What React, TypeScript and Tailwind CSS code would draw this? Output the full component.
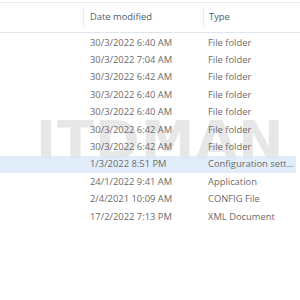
const rows = [
    { date: '30/3/2022 6:40 AM', type: 'File folder' },
    { date: '30/3/2022 7:04 AM', type: 'File folder' },
    { date: '30/3/2022 6:42 AM', type: 'File folder' },
    { date: '30/3/2022 6:40 AM', type: 'File folder' },
    { date: '30/3/2022 6:40 AM', type: 'File folder' },
    { date: '30/3/2022 6:42 AM', type: 'File folder' },
    { date: '30/3/2022 6:42 AM', type: 'File folder' },
    { date: '1/3/2022 8:51 PM', type: 'Configuration sett...', selected: true },
    { date: '24/1/2022 9:41 AM', type: 'Application' },
    { date: '2/4/2021 10:09 AM', type: 'CONFIG File' },
    { date: '17/2/2022 7:13 PM', type: 'XML Document' },
];

export default function App() {
    return (
        <div
            className="relative h-[300px] w-[300px] overflow-hidden bg-white text-[9.4px]"
            style={{ fontFamily: '"Open Sans", "Noto Sans", sans-serif' }}
        >
            <div
                className="pointer-events-none absolute left-[36px] top-[114px] whitespace-nowrap text-[54px] font-black leading-none tracking-[1px] text-[#d8d8d8] opacity-60"
                style={{ fontFamily: '"DejaVu Sans", sans-serif' }}
            >
                ITDMAN
            </div>
            <div className="relative">
                <div className="mt-[2px] border-t border-[#ececec]" />
                <div className="flex h-[30px] items-center border-b border-[#dbe6ef] text-[#4d5d6e]">
                    <div className="w-[84px] self-stretch py-[5px]">
                        <div className="h-full border-r border-[#ececec]" />
                    </div>
                    <div className="w-[120px] self-stretch py-[5px]">
                        <div className="flex h-full items-center border-r border-[#ececec] pl-[6px]">Date modified</div>
                    </div>
                    <div className="pl-[5px]">Type</div>
                </div>
                <div className="pt-[1px]">
                    {rows.map((r, i) => (
                        <div
                            key={i}
                            className={`mr-[4px] flex h-[17.4px] items-center whitespace-nowrap text-[#6b6b6b] ${r.selected ? 'bg-[#d9eaf8]/80' : ''}`}
                        >
                            <div className="w-[90px] shrink-0" />
                            <div className="w-[118px] shrink-0">{r.date}</div>
                            <div>{r.type}</div>
                        </div>
                    ))}
                </div>
            </div>
        </div>
    );
}
